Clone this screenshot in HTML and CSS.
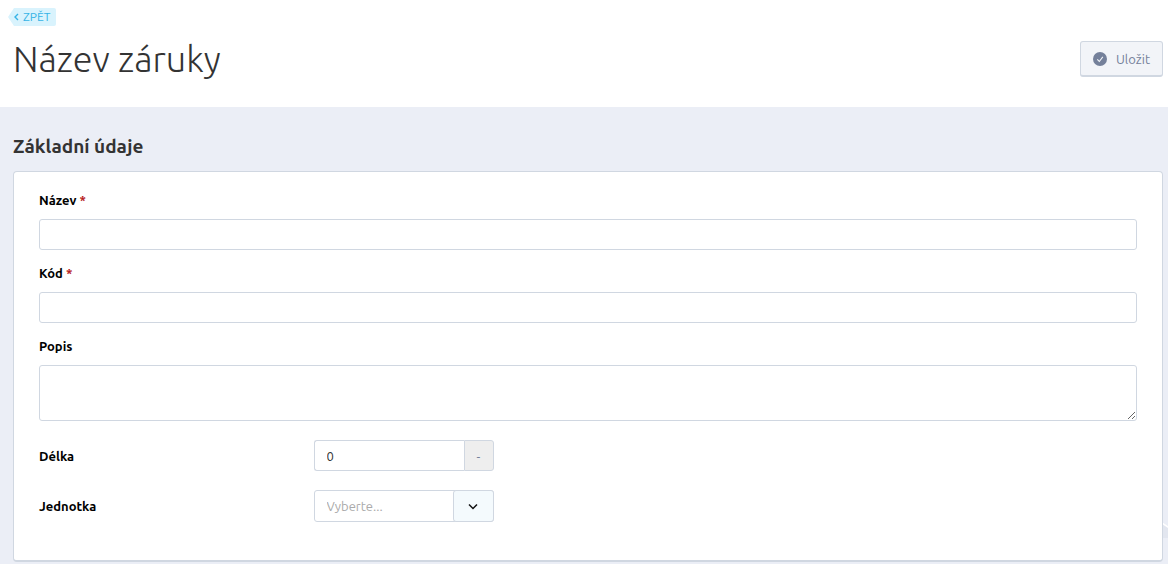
FILE: index.html
```html
<!DOCTYPE html>
<html lang="cs">
<head>
    <meta charset="utf-8">
    <title>Název záruky</title>
    <link rel="stylesheet" href="styles.css">
</head>
<body>
    <header class="page-header">
        <a href="#" class="back">
            <svg width="5" height="8" viewBox="0 0 5 8"><path d="M4 1 L1 4 L4 7" fill="none" stroke="currentColor" stroke-width="1.4"/></svg>
            <span>ZPĚT</span>
        </a>
        <div class="title-row">
            <h1>Název záruky</h1>
            <button type="submit" form="warrantyForm" class="save">
                <svg width="15" height="14" viewBox="0 0 15 14">
                    <circle cx="7" cy="7" r="7" fill="#74809a"/>
                    <path d="M4.3 7.4 L6.3 9.5 L9.8 4.8" fill="none" stroke="#f2f4f8" stroke-width="1.1"/>
                </svg>
                <span>Uložit</span>
            </button>
        </div>
    </header>

    <main class="content">
        <h2>Základní údaje</h2>
        <form class="card" id="warrantyForm">
            <div class="field">
                <label for="name">Název <span class="required">*</span></label>
                <input type="text" id="name" class="control">
            </div>
            <div class="field">
                <label for="code">Kód <span class="required">*</span></label>
                <input type="text" id="code" class="control">
            </div>
            <div class="field">
                <label for="description">Popis</label>
                <textarea id="description" class="control"></textarea>
            </div>
            <div class="field-row">
                <label for="length">Délka</label>
                <div class="input-group">
                    <input type="text" id="length" class="control" value="0">
                    <span class="unit">-</span>
                </div>
            </div>
            <div class="field-row">
                <label for="unit">Jednotka</label>
                <div class="select-group">
                    <select id="unit" class="control">
                        <option>Vyberte...</option>
                    </select>
                    <span class="arrow">
                        <svg width="10" height="8" viewBox="0 0 10 8"><path d="M1 2.5 L5 6.5 L9 2.5" fill="none" stroke="#111" stroke-width="1.5"/></svg>
                    </span>
                </div>
            </div>
        </form>
        <!-- Background decoration behind the card -->
        <svg class="decor" width="6" height="18" viewBox="0 0 6 18">
            <path d="M0 0 L6 4 V16 H0 Z" fill="#e2e6ef"/>
            <path d="M0 0 L6 4 V6 L0 2 Z" fill="#fff"/>
        </svg>
    </main>
</body>
</html>
```

FILE: styles.css
```css
* {
    box-sizing: border-box;
}

body {
    margin: 0;
    min-height: 100vh;
    display: flex;
    flex-direction: column;
    font-family: Ubuntu, "Noto Sans", sans-serif;
    font-size: 13px;
    line-height: 18px;
    color: #333;
    background: #fff;
}

.page-header {
    padding: 8px 5px 24px 8px;
}

.back {
    display: flex;
    align-items: center;
    gap: 4px;
    width: fit-content;
    height: 18px;
    padding: 0 6px;
    border-radius: 2px;
    clip-path: polygon(6px 0, 100% 0, 100% 100%, 6px 100%, 0 50%);
    font-size: 12px;
    color: #36b3e6;
    background: #d9f3fd;
    text-decoration: none;
}

.title-row {
    display: flex;
    align-items: center;
    justify-content: space-between;
    margin-top: 9px;
    padding-left: 5px;
}

h1 {
    margin: 0;
    font-family: Ubuntu, "Open Sans", sans-serif;
    font-size: 36px;
    font-weight: 300;
    line-height: 48px;
}

.save {
    display: flex;
    align-items: center;
    gap: 8px;
    height: 36px;
    padding: 0 12px;
    border: 1px solid #d0d7e1;
    border-bottom-width: 2px;
    border-radius: 3px;
    font: inherit;
    color: #74809a;
    background: #f2f4f8;
    cursor: pointer;
}

.content {
    position: relative;
    flex: 1;
    padding: 26px 5px 2px 13px;
    background: #ebeef6;
}

h2 {
    margin: 0 0 12px;
    font-size: 19px;
    font-weight: 600;
    line-height: 26px;
}

.card {
    position: relative;
    z-index: 1;
    padding: 19px 25px 38px;
    border: 1px solid #d0d7e1;
    border-bottom-width: 2px;
    border-radius: 4px;
    background: #fff;
}

.field {
    margin-bottom: 14px;
}

label {
    display: block;
    font-weight: 600;
    color: #000;
}

.field label {
    margin-bottom: 10px;
}

.required {
    color: #b81c1c;
}

.control {
    display: block;
    width: 100%;
    height: 31px;
    padding: 0 12px;
    border: 1px solid #d0d7e1;
    border-radius: 3px;
    font: inherit;
    color: #333;
    background: #fff;
}

textarea.control {
    height: 56px;
    padding: 6px 12px;
    resize: vertical;
}

.field-row {
    display: flex;
    align-items: center;
    margin-top: 19px;
}

.field-row label {
    width: 25%;
}

.input-group,
.select-group {
    display: flex;
    width: 180px;
    height: 31px;
}

.select-group {
    position: relative;
    height: 32px;
}

.input-group .control {
    flex: 1;
    min-width: 0;
    border-right: 0;
    border-radius: 3px 0 0 3px;
}

.unit {
    display: flex;
    align-items: center;
    justify-content: center;
    width: 30px;
    border: 1px solid #d0d7e1;
    border-radius: 0 3px 3px 0;
    color: #74809a;
    background: #eee;
}

select.control {
    height: 32px;
    appearance: none;
    color: #aaa;
}

/* lies over the right end of the select */
.arrow {
    position: absolute;
    top: 0;
    right: 0;
    bottom: 0;
    display: flex;
    align-items: center;
    justify-content: center;
    width: 41px;
    border: 1px solid #d0d7e1;
    border-radius: 3px;
    background: #f4fafd;
    pointer-events: none;
}

.decor {
    position: absolute;
    right: 0;
    bottom: 24px;
}
```
